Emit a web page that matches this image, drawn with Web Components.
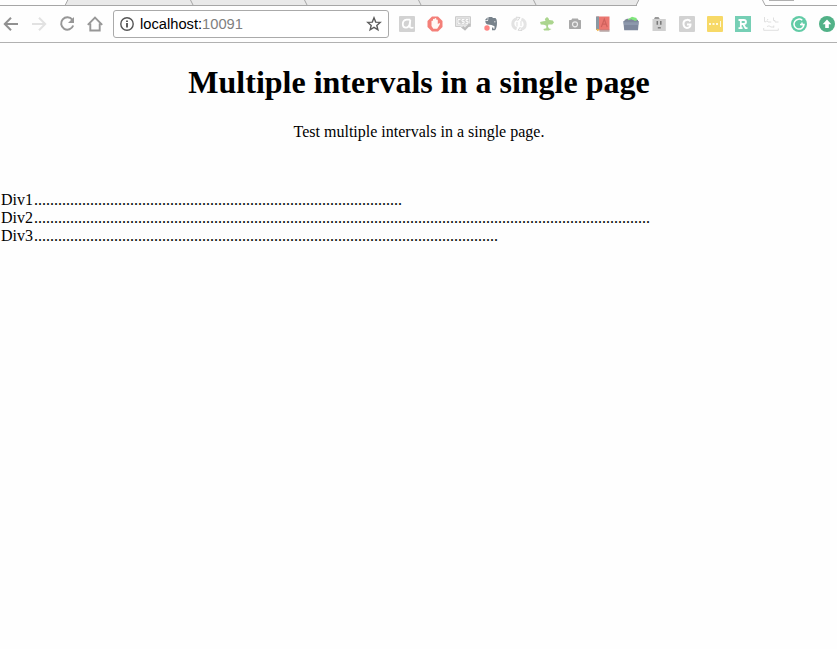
<!DOCTYPE html>
<html lang="en">
<head>
<meta charset="utf-8">
<title>Multiple intervals in a single page</title>
<style>
html,body{margin:0;height:100%;overflow:hidden;background:#fefefe}
</style>
</head>
<body>
<demo-window></demo-window>
<script>
const define = (name, html) => customElements.define(name, class extends HTMLElement {
  constructor() {
    super();
    const t = document.createElement('template');
    t.innerHTML = html;
    this.attachShadow({mode: 'open'}).append(t.content.cloneNode(true));
  }
});

define('tab-strip', `<style>:host{display:block;height:6px}svg{display:block}</style>
<svg width="837" height="6" viewBox="0 0 837 6">
<path d="M68 0H639L636.5 5H65.5Z" fill="#e9e9e9"/>
<path d="M0 5.5H637M765 5.5H837" stroke="#a6a6a6"/>
<path d="M67.8 0L65.3 5M190.5 0L193 5M304.5 0L307 5M418.5 0L421 5M533.5 0L536 5M638.8 0L636.3 5M762.5 0L765 5" stroke="#a6a6a6" fill="none"/>
<path d="M769 0.5H794" stroke="#b0b0b0"/>
</svg>`);

define('address-box', `<style>
:host{display:flex;box-sizing:border-box;width:276px;height:28px;border:1px solid #aaa;border-radius:3px;background:#fff;align-items:center;padding:0 6px 0 6px;font:14.7px/18px "Liberation Sans",Arial,sans-serif;color:#000}
svg{flex:none}.url{flex:1;margin-left:5px;white-space:nowrap}.port{color:#808080}
</style>
<svg width="15" height="16" viewBox="0 0 15 16"><circle cx="7" cy="8" r="6.2" fill="none" stroke="#555" stroke-width="1.4"/><path d="M7 7V11.5M7 4.4V6" stroke="#444" stroke-width="1.7"/></svg>
<span class="url"><slot></slot><span class="port"><slot name="port"></slot></span></span>
<svg width="16" height="16" viewBox="0 0 16 16"><path d="M8 1.8L9.7 6.1L14.2 6.4L10.8 9.4L11.9 13.8L8 11.4L4.1 13.8L5.2 9.4L1.8 6.4L6.3 6.1Z" fill="none" stroke="#5b5b5b" stroke-width="1.4"/></svg>`);

const icons = {
back:`<path d="M15 8H2M8 1.8L1.8 8L8 14.2" fill="none" stroke="#919191" stroke-width="2"/>`,
forward:`<path d="M1 8H14M8 1.8L14.2 8L8 14.2" fill="none" stroke="#e2e2e2" stroke-width="2"/>`,
reload:`<path d="M13.3 3.7A6.2 6.2 0 1 0 14.2 9.5" fill="none" stroke="#979797" stroke-width="2"/><path d="M15 1V7H9Z" fill="#979797"/>`,
home:`<path d="M.8 8.8L8 1.6L15.2 8.8M3.3 7.5V14.5H12.7V7.5" fill="none" stroke="#979797" stroke-width="1.9"/>`,
at:`<rect width="16" height="16" rx="1" fill="#d2d2d2"/><path d="M11.3 3.6H7.5Q3.8 4.2 3.8 8Q3.8 11.6 7 11.7Q10 11.5 10.8 7.5L11.3 3.6L10.8 10.3Q11 12.5 14.5 11.5" fill="none" stroke="#fff" stroke-width="1.8"/>`,
hand:`<path d="M5 .5H11L15.5 5V11L11 15.5H5L.5 11V5Z" fill="#f47f78"/><path d="M4.5 8V5Q5.3 4 6 5V3.2Q6.9 2.2 7.6 3.2V2.4Q8.6 1.5 9.3 2.6V3.8Q10.4 3 10.8 4.2V8L12.5 7Q13.5 7.5 12.5 9L10.2 12.8H6.3L4.5 10Z" fill="#fff8f5"/>`,
css:`<path d="M.5 .7H15.5V10.5H11L8.5 13L5.5 10.5H.5Z" fill="#e6e6e6" stroke="#cbcbcb"/><path d="M2 2.5H14V8.3H2Z" fill="#cecece"/><path d="M5.5 3.6H3V7.3H5.5M9.5 3.6H7V5.3H9.1V7.3H6.7M13.3 3.6H11V5.3H13V7.3H10.5" fill="none" stroke="#fff" stroke-width="1"/><path d="M7.5 10.8L10 13.3L15 8" fill="none" stroke="#bcbcbc" stroke-width="2"/>`,
elephant:`<path d="M5.5 1H9L10 2H12.5Q14 3 14 6.5Q14 12 12 14.2H9V11.5H10.3V12.8H11.5V10.3L8.5 9L5 8.5Q2.5 8.2 2.3 5H5Z" fill="#77828b"/><path d="M4.6 1.3V4.2H1.8Z" fill="#77828b"/><circle cx="4" cy="12" r="2.7" fill="#ff8583"/><path d="M11 5.8H12.5" stroke="#d9dde0"/>`,
cycle:`<path d="M6.3 2.6Q1.8 3.5 1.8 7.8Q1.8 11.5 5.6 12.8" fill="none" stroke="#e2e2e2" stroke-width="3"/><path d="M9.7 13.4Q14.2 12.5 14.2 8.2Q14.2 4.5 10.4 3.2" fill="none" stroke="#e4e4e4" stroke-width="3"/><path d="M5 1.2L9 1.5L6.6 4.8M11 14.5L7 14.2L9.4 11" fill="none" stroke="#d8d8d8"/><path d="M6 6V10.5M10 5V10" stroke="#ddd"/>`,
tree:`<path d="M5.8 3L8 1L9.5 2.2L10.2 4L13.8 4.5L15 6.5L13.2 8.5H9.4L8.9 10.5L10 12.4L12.5 13L9.8 14.5H5.2L4.3 13L7.3 12.2V9.8L5 8.8L1.8 8.5L1 6L4.2 5.3L6.5 5Z" fill="#abd58e"/>`,
camera:`<path d="M5.2 2.5H10.8L11.7 4H13.5L14 4.5V12.5L13.5 13H2.5L2 12.5V4.5L2.5 4H4.3Z" fill="#a9a9a9"/><circle cx="8" cy="8.3" r="2.5" fill="#a9a9a9" stroke="#ededed" stroke-width="1.2"/>`,
book:`<path d="M1.5 .5H14.5V13.5H1.5Z" fill="#eb7771"/><path d="M1 .5H4V14H1Z" fill="#8998a2"/><path d="M6.3 11L9.3 3.2L12.2 11M7.5 8.2H11.2" stroke="#cf625d" stroke-width="1.2" fill="none"/><path d="M4 13.8H14.5" stroke="#c9605b"/><path d="M4.5 15H14.5" stroke="#8f7976"/><path d="M1 12.7L5 13.5L2.5 15.2Z" fill="#f3b84d"/>`,
bag:`<path d="M1.5 4L4 2.7H12L15 4V7H1.5Z" fill="#7d8696"/><path d="M5 3.3L9 .8L13.6 2V4.8H11L8.5 3.2L5 4.3Z" fill="#80e67c"/><path d="M.3 5H5L6 4.2H10.5L11.5 5H15.8L15 14.3H1.2Z" fill="#7e889d"/><path d="M.5 6.3H15.6L15.2 9H1Z" fill="#8d98ad"/>`,
face:`<path d="M1.5 3H14.8V15H1.5Z" fill="#d0d0d0"/><path d="M3 2.8L4 1.3H7.5L8.8 2.8Z" fill="#777"/><path d="M6.3 5V8.7M9.8 5V8.7" stroke="#777" stroke-width="1.5"/><path d="M6.8 11.8H9.8" stroke="#777" stroke-width="1.4"/>`,
g:`<rect width="16" height="16" rx="1" fill="#d2d2d2"/><path d="M11.5 5.4Q9.9 3.5 7.7 3.9Q4.3 4.3 4.5 8Q4.8 11.8 8 12Q11.6 11.8 11.5 8.4H8" fill="none" stroke="#fff" stroke-width="2"/>`,
dots:`<rect width="16" height="16" rx="1" fill="#f7d967"/><path d="M2 7H4V9H2ZM5.5 7H7.5V9H5.5ZM9 7H11V9H9ZM13 5H14V11H13Z" fill="#fff9de"/>`,
r:`<rect width="16" height="16" fill="#76cfb5"/><path d="M3.5 4H8.8Q11 4.2 11 6Q11 8 8.7 8H5.8M5.8 4V12.2M3.5 12.2H7.6M8.2 8L10.5 12.2H12.5" fill="none" stroke="#fff" stroke-width="1.8"/>`,
sketch:`<path d="M1.5 1V5.8H3L4 4.7L5 6H8.2M10.5 1.5V4.5H12V6H15.5M4 10.5L6 9.8L8 11H11M.7 12V14.3H15.3V12.5M4.7 3V4M10.8 9.5V11.5" fill="none" stroke="#dcdcdc" stroke-width=".9"/>`,
grammar:`<circle cx="8" cy="8" r="8" fill="#62cba6"/><path d="M11.3 4.3A5 5 0 1 0 13 8.6H9M11 6.5V8.7H13" fill="none" stroke="#fff" stroke-width="1.5"/>`,
up:`<circle cx="8" cy="8" r="8" fill="#51b187"/><path d="M8 3.5L12.3 8.2H9.8V12H6.2V8.2H3.7Z" fill="#fff"/>`
};
customElements.define('bar-icon', class extends HTMLElement {
  connectedCallback() {
    if (this.shadowRoot) return;
    this.attachShadow({mode:'open'}).innerHTML = `<style>:host{display:block;width:16px;height:16px;flex:none}svg{display:block}</style><svg width="16" height="16" viewBox="0 0 16 16">${icons[this.getAttribute('name')]}</svg>`;
  }
});
const row = names => names.split(' ').map(n => `<bar-icon name="${n}"></bar-icon>`).join('');

define('tool-bar', `<style>
:host{display:flex;box-sizing:border-box;height:37px;border-bottom:1px solid #b1b1b1;align-items:center;padding-left:3px;background:#fefefe;overflow:hidden}
div{display:flex;gap:12px}address-box{flex:none;margin:0 10px}
</style><div>${row('back forward reload home')}</div>
<address-box>localhost:<span slot="port">10091</span></address-box>
<div>${row('at hand css elephant cycle tree camera book bag face g dots r sketch grammar up')}</div>`);

define('page-intro', `<style>
:host{display:block;text-align:center;padding-top:21px}
h1{font-size:32px;line-height:37px;margin:0}p{margin:22px 0 0;line-height:18px}
</style><h1><slot name="title"></slot></h1><p><slot></slot></p>`);

customElements.define('interval-line', class extends HTMLElement {
  connectedCallback() {
    if (this.shadowRoot) return;
    this.attachShadow({mode:'open'}).innerHTML = `<style>:host{display:block;line-height:18px;height:18px;white-space:nowrap}span{margin-left:1px}</style><slot></slot><span>${'.'.repeat(+this.getAttribute('count'))}</span>`;
  }
});

define('demo-window', `<style>
:host{display:flex;flex-direction:column;width:837px;height:649px;overflow:hidden;background:#fefefe;color:#000;font:16px "Liberation Serif","Times New Roman",serif}
section{margin-top:50px;padding-left:1px}page-intro{padding-left:1px}
</style><tab-strip></tab-strip><tool-bar></tool-bar>
<page-intro><span slot="title">Multiple intervals in a single page</span>Test multiple intervals in a single page.</page-intro>
<section><interval-line count="92">Div1</interval-line><interval-line count="154">Div2</interval-line><interval-line count="116">Div3</interval-line></section>`);
</script>
</body>
</html>
